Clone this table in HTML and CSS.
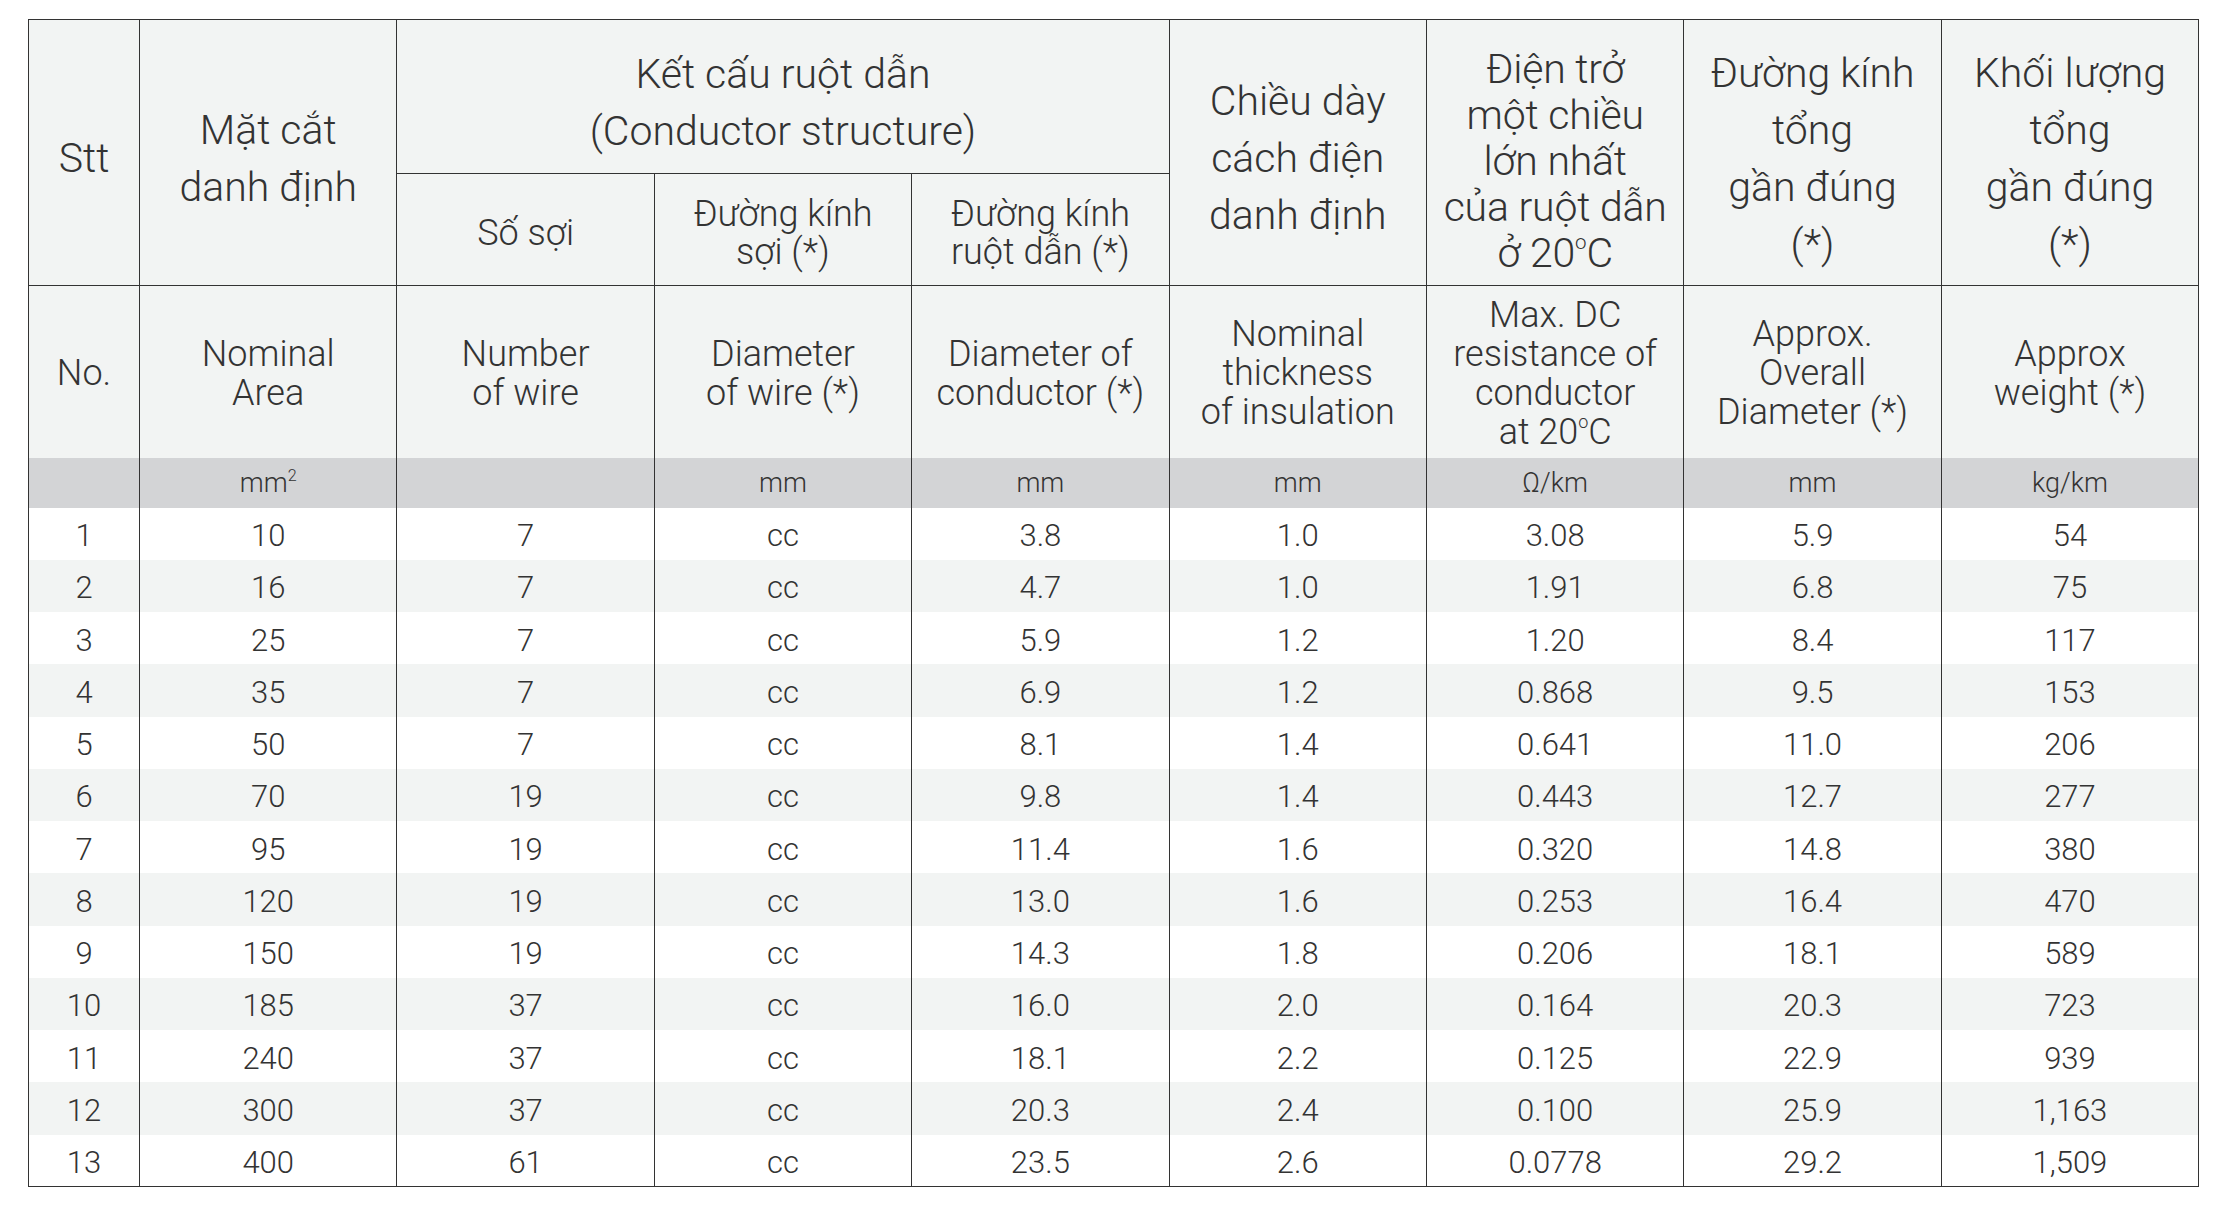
FILE: index.html
```html
<!DOCTYPE html>
<html lang="vi">
<head>
<meta charset="utf-8">
<title>Bảng thông số cáp</title>
<link rel="stylesheet" href="styles.css">
</head>
<body>
<table class="spec">
  <colgroup>
    <col class="c-no">
    <col class="c-std"><col class="c-std"><col class="c-std"><col class="c-std">
    <col class="c-std"><col class="c-std"><col class="c-std"><col class="c-std">
  </colgroup>
  <thead>
    <tr class="h1">
      <th class="vi big line-b" rowspan="2">Stt</th>
      <th class="vi big line-b" rowspan="2">Mặt cắt<br>danh định</th>
      <th class="vi big line-b" colspan="3">Kết cấu ruột dẫn<br>(Conductor structure)</th>
      <th class="vi big line-b" rowspan="2">Chiều dày<br>cách điện<br>danh định</th>
      <th class="vi big tight line-b" rowspan="2">Điện trở<br>một chiều<br>lớn nhất<br>của ruột dẫn<br>ở 20<sup class="deg">o</sup>C</th>
      <th class="vi big line-b" rowspan="2">Đường kính<br>tổng<br>gần đúng<br>(*)</th>
      <th class="vi big line-b" rowspan="2">Khối lượng<br>tổng<br>gần đúng<br>(*)</th>
    </tr>
    <tr class="h2">
      <th class="vi mid line-b">Số sợi</th>
      <th class="vi mid line-b">Đường kính<br>sợi (*)</th>
      <th class="vi mid line-b">Đường kính<br>ruột dẫn (*)</th>
    </tr>
    <tr class="h3">
      <th class="en">No.</th>
      <th class="en">Nominal<br>Area</th>
      <th class="en">Number<br>of wire</th>
      <th class="en">Diameter<br>of wire (*)</th>
      <th class="en">Diameter of<br>conductor (*)</th>
      <th class="en">Nominal<br>thickness<br>of insulation</th>
      <th class="en">Max. DC<br>resistance of<br>conductor<br>at 20<sup class="deg">o</sup>C</th>
      <th class="en">Approx.<br>Overall<br>Diameter (*)</th>
      <th class="en">Approx<br>weight (*)</th>
    </tr>
    <tr class="units">
      <th></th>
      <th>mm<sup class="sq">2</sup></th>
      <th></th>
      <th>mm</th>
      <th>mm</th>
      <th>mm</th>
      <th>Ω/km</th>
      <th>mm</th>
      <th>kg/km</th>
    </tr>
  </thead>
  <tbody>
    <tr><td>1</td><td>10</td><td>7</td><td>cc</td><td>3.8</td><td>1.0</td><td>3.08</td><td>5.9</td><td>54</td></tr>
    <tr><td>2</td><td>16</td><td>7</td><td>cc</td><td>4.7</td><td>1.0</td><td>1.91</td><td>6.8</td><td>75</td></tr>
    <tr><td>3</td><td>25</td><td>7</td><td>cc</td><td>5.9</td><td>1.2</td><td>1.20</td><td>8.4</td><td>117</td></tr>
    <tr><td>4</td><td>35</td><td>7</td><td>cc</td><td>6.9</td><td>1.2</td><td>0.868</td><td>9.5</td><td>153</td></tr>
    <tr><td>5</td><td>50</td><td>7</td><td>cc</td><td>8.1</td><td>1.4</td><td>0.641</td><td>11.0</td><td>206</td></tr>
    <tr><td>6</td><td>70</td><td>19</td><td>cc</td><td>9.8</td><td>1.4</td><td>0.443</td><td>12.7</td><td>277</td></tr>
    <tr><td>7</td><td>95</td><td>19</td><td>cc</td><td>11.4</td><td>1.6</td><td>0.320</td><td>14.8</td><td>380</td></tr>
    <tr><td>8</td><td>120</td><td>19</td><td>cc</td><td>13.0</td><td>1.6</td><td>0.253</td><td>16.4</td><td>470</td></tr>
    <tr><td>9</td><td>150</td><td>19</td><td>cc</td><td>14.3</td><td>1.8</td><td>0.206</td><td>18.1</td><td>589</td></tr>
    <tr><td>10</td><td>185</td><td>37</td><td>cc</td><td>16.0</td><td>2.0</td><td>0.164</td><td>20.3</td><td>723</td></tr>
    <tr><td>11</td><td>240</td><td>37</td><td>cc</td><td>18.1</td><td>2.2</td><td>0.125</td><td>22.9</td><td>939</td></tr>
    <tr><td>12</td><td>300</td><td>37</td><td>cc</td><td>20.3</td><td>2.4</td><td>0.100</td><td>25.9</td><td>1,163</td></tr>
    <tr><td>13</td><td>400</td><td>61</td><td>cc</td><td>23.5</td><td>2.6</td><td>0.0778</td><td>29.2</td><td>1,509</td></tr>
  </tbody>
</table>
</body>
</html>
```
FILE: styles.css
```css
html, body {
  margin: 0;
  padding: 0;
  background: #ffffff;
}

body {
  padding: 19px 0 0 28px;
  font-family: Roboto, "Liberation Sans", "Noto Sans", sans-serif;
  font-weight: 300;
  color: #333333;
}

.spec {
  border-collapse: collapse;
  table-layout: fixed;
  width: 2170px;
  border: 1.5px solid #333333;
}

.c-no { width: 111px; }
.c-std { width: 257.4px; }

.spec th,
.spec td {
  border-left: 1.5px solid #333333;
  border-right: 1.5px solid #333333;
  padding: 0;
  text-align: center;
  vertical-align: middle;
  font-weight: 300;
  white-space: nowrap;
}

.spec thead th {
  background: #f2f4f3;
}

.line-b {
  border-bottom: 1.5px solid #333333;
}

.h1 { height: 154px; }
.h2 { height: 112px; }
.h3 { height: 172px; }
.units { height: 50px; }

.big {
  font-size: 41px;
  line-height: 57px;
  padding-top: 12px !important;
}

.big.tight {
  line-height: 46px;
  letter-spacing: -0.2px;
  padding-top: 16px !important;
}

.mid {
  font-size: 36px;
  line-height: 38px;
  padding-top: 6px !important;
}

.en {
  font-size: 36px;
  line-height: 39px;
  padding-top: 4px !important;
}

.spec .units th {
  background: #d3d4d6;
  font-size: 27px;
  line-height: 30px;
}

.deg {
  font-size: 0.5em;
  vertical-align: 0.9em;
  line-height: 0;
}

.sq {
  font-size: 0.6em;
  vertical-align: 0.7em;
  line-height: 0;
}

.spec tbody tr {
  height: 52.25px;
}

.spec tbody td {
  font-size: 31px;
  line-height: 30px;
  padding-top: 5px;
}

.spec tbody tr:nth-child(even) td {
  background: #f2f4f3;
}
```
